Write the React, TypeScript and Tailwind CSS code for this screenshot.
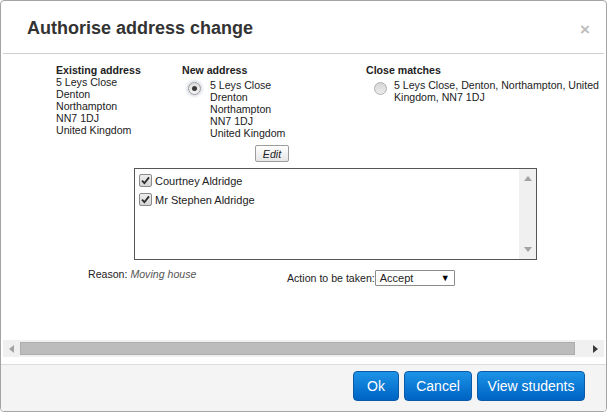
import React from "react";

function Radio({ checked }: { checked?: boolean }) {
  return checked ? (
    <div className="w-[13px] h-[13px] rounded-full border border-[#9a9a9a] bg-gradient-to-b from-[#dedede] to-[#f4f4f4] flex items-center justify-center shadow-[0_0_2px_2px_#e3e6ee] shrink-0">
      <div className="w-[5px] h-[5px] rounded-full bg-[#3a3a3a]" />
    </div>
  ) : (
    <div className="w-[13px] h-[13px] rounded-full border border-[#b0b0b0] bg-gradient-to-b from-[#d6d6d6] to-[#ececec] shrink-0" />
  );
}

function Check() {
  return (
    <div className="w-[13px] h-[13px] rounded-[2px] border border-[#8a8a8a] bg-gradient-to-b from-[#eeeeee] to-[#d4d4d4] flex items-center justify-center shrink-0">
      <svg width="9" height="9" viewBox="0 0 9 9">
        <path d="M1 4.6 L3.4 7.2 L8 1.4" fill="none" stroke="#2a2a2a" strokeWidth="1.8" />
      </svg>
    </div>
  );
}

export default function App() {
  return (
    <div
      className="w-[607px] h-[412px] bg-white border border-[#a4a4a4] rounded-[4px] flex flex-col overflow-hidden text-[#222]"
      style={{ fontFamily: '"Liberation Sans", Arial, sans-serif' }}
    >
      {/* Header */}
      <div className="h-[53px] mx-[2px] border-b border-[#cfcfcf] flex items-center justify-between pl-[24px] pr-[14px] shrink-0">
        <div className="text-[18px] font-bold text-[#333] leading-none pt-[2px]">Authorise address change</div>
        <div className="text-[17px] font-bold text-[#bdbdbd] leading-none pt-[4px]">×</div>
      </div>

      {/* Body */}
      <div className="h-[310px] flex flex-col shrink-0">
        <div className="h-[286px] overflow-hidden text-[10.6px] leading-[12px]">
          <div className="flex pt-[10px] pl-[55px] w-[700px]">
            {/* Existing */}
            <div className="w-[126px] shrink-0">
              <div className="font-bold">Existing address</div>
              <div>5 Leys Close</div>
              <div>Denton</div>
              <div>Northampton</div>
              <div>NN7 1DJ</div>
              <div>United Kingdom</div>
            </div>
            {/* New */}
            <div className="w-[184px] shrink-0">
              <div className="font-bold">New address</div>
              <div className="flex mt-[3px]">
                <div className="pl-[6px] pt-[3px] w-[28px]">
                  <Radio checked />
                </div>
                <div>
                  <div>5 Leys Close</div>
                  <div>Drenton</div>
                  <div>Northampton</div>
                  <div>NN7 1DJ</div>
                  <div>United Kingdom</div>
                </div>
              </div>
              <div className="mt-[6px] ml-[73px] w-[34px] h-[17px] border border-[#9c9c9c] rounded-[2px] bg-gradient-to-b from-[#ffffff] to-[#e6e6e6] flex items-center justify-center italic text-[10.6px]">
                Edit
              </div>
            </div>
            {/* Close matches */}
            <div className="shrink-0">
              <div className="font-bold">Close matches</div>
              <div className="flex mt-[3px]">
                <div className="pl-[8px] pt-[3px] w-[28px]">
                  <Radio />
                </div>
                <div className="w-[212px]">
                  5 Leys Close, Denton, Northampton, United Kingdom, NN7 1DJ
                </div>
              </div>
            </div>
          </div>

          {/* List box */}
          <div className="mt-[6px] ml-[133px] w-[403px] h-[92px] border border-[#555] flex">
            <div className="flex-1 pt-[2px] pl-[4px] text-[11px]">
              <div className="flex items-center h-[19px] gap-[3px]">
                <Check />
                <span className="leading-[13px] pt-[1px]">Courtney Aldridge</span>
              </div>
              <div className="flex items-center h-[19px] gap-[3px]">
                <Check />
                <span className="leading-[13px] pt-[1px]">Mr Stephen Aldridge</span>
              </div>
            </div>
            <div className="w-[17px] bg-[#f0f0f0] flex flex-col items-center justify-between py-[7px]">
              <svg width="8" height="5" viewBox="0 0 8 5">
                <path d="M0 5 L4 0 L8 5 Z" fill="#a3a3a3" />
              </svg>
              <svg width="8" height="5" viewBox="0 0 8 5">
                <path d="M0 0 L8 0 L4 5 Z" fill="#a3a3a3" />
              </svg>
            </div>
          </div>

          {/* Reason / action */}
          <div className="flex items-start">
            <div className="ml-[87px] w-[199px] mt-[8px]">
              Reason: <span className="italic text-[#555]">Moving house</span>
            </div>
            <div className="flex items-center mt-[10px]">
              <span>Action to be taken:</span>
              <div className="w-[80px] h-[16px] border border-[#8c8c8c] rounded-[1px] bg-white flex items-center justify-between pl-[4px] pr-[4px] text-[11px]">
                <span>Accept</span>
                <span className="text-[9px] text-black">▼</span>
              </div>
            </div>
          </div>
        </div>

        {/* Horizontal scrollbar */}
        <div className="h-[17px] mx-[2px] bg-[#f0f0f0] flex items-center shrink-0">
          <div className="w-[17px] flex items-center justify-center">
            <svg width="5" height="8" viewBox="0 0 5 8">
              <path d="M5 0 L0 4 L5 8 Z" fill="#a3a3a3" />
            </svg>
          </div>
          <div className="ml-[0px] w-[555px] h-[13px] bg-[#bcbcbc] border border-[#adadad]" />
          <div className="flex-1" />
          <div className="w-[17px] flex items-center justify-center">
            <svg width="5" height="8" viewBox="0 0 5 8">
              <path d="M0 0 L5 4 L0 8 Z" fill="#3a3a3a" />
            </svg>
          </div>
        </div>
        <div className="h-[7px]" />
      </div>

      {/* Footer */}
      <div className="flex-1 border-t border-[#dcdcdc] bg-[#f4f4f4] flex items-start justify-end pt-[6px] pr-[21px] gap-[5px]">
        <button className="h-[30px] px-[13px] rounded-[4px] border border-[#0b5aa8] bg-gradient-to-b from-[#1d93e6] to-[#0063c4] text-white text-[14px] leading-none">
          Ok
        </button>
        <button className="h-[30px] w-[68px] rounded-[4px] border border-[#0b5aa8] bg-gradient-to-b from-[#1d93e6] to-[#0063c4] text-white text-[14px] leading-none">
          Cancel
        </button>
        <button className="h-[30px] w-[108px] rounded-[4px] border border-[#0b5aa8] bg-gradient-to-b from-[#1d93e6] to-[#0063c4] text-white text-[14px] leading-none">
          View students
        </button>
      </div>
    </div>
  );
}
